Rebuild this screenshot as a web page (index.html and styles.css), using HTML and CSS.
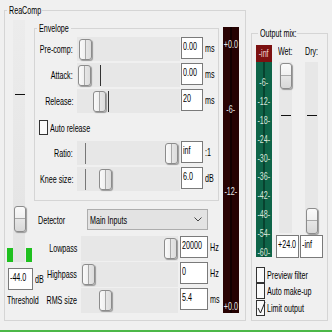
FILE: index.html
```html
<!DOCTYPE html>
<html lang="en">
<head>
    <meta charset="UTF-8">
    <title>ReaComp</title>
    <link rel="stylesheet" href="styles.css">
</head>
<body>
<div class="app">
    <div class="panels">
        <fieldset class="group reacomp">
            <legend><span class="sx">ReaComp</span></legend>
            <div class="reacomp-body">
                <!-- threshold fader -->
                <div class="threshold">
                    <div class="thr-slider">
                        <span class="led"></span>
                        <div class="vtrack thr-track">
                            <span class="vtick" style="top:74px"></span>
                            <span class="vthumb" style="top:186px"></span>
                        </div>
                        <span class="led"></span>
                    </div>
                    <div class="thr-value"><span class="field"><span class="sx">-44.0</span></span><span class="unit sx">dB</span></div>
                    <div class="thr-label"><span class="sx">Threshold</span></div>
                </div>

                <div class="controls">
                    <fieldset class="group envelope">
                        <legend><span class="sx">Envelope</span></legend>
                        <div class="row">
                            <label><span class="sx">Pre-comp:</span></label>
                            <div class="htrack"><span class="hthumb" style="left:2px"></span></div>
                            <span class="field"><span class="sx">0.00</span></span><span class="unit sx">ms</span>
                        </div>
                        <div class="row">
                            <label><span class="sx">Attack:</span></label>
                            <div class="htrack"><span class="htick" style="left:23px"></span><span class="hthumb" style="left:1px"></span></div>
                            <span class="field"><span class="sx">0.00</span></span><span class="unit sx">ms</span>
                        </div>
                        <div class="row">
                            <label><span class="sx">Release:</span></label>
                            <div class="htrack"><span class="htick" style="left:31px"></span><span class="hthumb" style="left:16px"></span></div>
                            <span class="field"><span class="sx">20</span></span><span class="unit sx">ms</span>
                        </div>
                        <div class="check-row">
                            <span class="box"></span><span class="sx">Auto release</span>
                        </div>
                        <div class="row">
                            <label><span class="sx">Ratio:</span></label>
                            <div class="htrack"><span class="htick light" style="left:8px"></span><span class="hthumb" style="left:88px"></span></div>
                            <span class="field"><span class="sx">inf</span></span><span class="unit sx">:1</span>
                        </div>
                        <div class="row">
                            <label><span class="sx">Knee size:</span></label>
                            <div class="htrack"><span class="htick light" style="left:8px"></span><span class="hthumb" style="left:22px"></span></div>
                            <span class="field"><span class="sx">6.0</span></span><span class="unit sx">dB</span>
                        </div>
                    </fieldset>

                    <div class="detector">
                        <label><span class="sx">Detector</span></label>
                        <div class="select">
                            <span class="sx">Main Inputs</span>
                            <svg width="8" height="5" viewBox="0 0 8 5"><polyline points="0.5,0.5 4,4 7.5,0.5" fill="none" stroke="#444" stroke-width="1"/></svg>
                        </div>
                    </div>

                    <div class="filters">
                        <div class="row">
                            <label><span class="sx">Lowpass</span></label>
                            <div class="htrack"><span class="hthumb" style="left:83px"></span></div>
                            <span class="field"><span class="sx">20000</span></span><span class="unit sx">Hz</span>
                        </div>
                        <div class="row">
                            <label><span class="sx">Highpass</span></label>
                            <div class="htrack"><span class="hthumb" style="left:1px"></span></div>
                            <span class="field"><span class="sx">0</span></span><span class="unit sx">Hz</span>
                        </div>
                        <div class="row">
                            <label><span class="sx">RMS size</span></label>
                            <div class="htrack"><span class="hthumb" style="left:18px"></span></div>
                            <span class="field"><span class="sx">5.4</span></span><span class="unit sx">ms</span>
                        </div>
                    </div>
                </div>

                <!-- gain reduction meter -->
                <div class="gr-meter">
                    <span class="mark" style="top:12px"><span class="sx">+0.0</span></span>
                    <span class="mark" style="top:77px"><span class="sx">-6-</span></span>
                    <span class="mark" style="top:159px"><span class="sx">-12-</span></span>
                    <span class="mark" style="top:274px"><span class="sx">+0.0</span></span>
                </div>
            </div>
        </fieldset>

        <fieldset class="group output">
            <legend><span class="sx">Output mix:</span></legend>
            <div class="mix">
                <div class="out-meter">
                    <div class="clip"><span class="sx">-inf</span></div>
                    <div class="scale">
                        <span class="sx">-6-</span><span class="sx">-12-</span><span class="sx">-18-</span><span class="sx">-24-</span><span class="sx">-30-</span>
                        <span class="sx">-36-</span><span class="sx">-42-</span><span class="sx">-48-</span><span class="sx">-54-</span><span class="sx">-60-</span>
                    </div>
                </div>
                <div class="fader wet">
                    <div class="fader-label"><span class="sx">Wet:</span></div>
                    <div class="vtrack mix-track">
                        <span class="vtick" style="top:53px"></span>
                        <span class="vthumb" style="top:1px"></span>
                    </div>
                    <span class="field"><span class="sx">+24.0</span></span>
                </div>
                <div class="fader dry">
                    <div class="fader-label"><span class="sx">Dry:</span></div>
                    <div class="vtrack mix-track">
                        <span class="vtick" style="top:53px"></span>
                        <span class="vthumb" style="top:146px"></span>
                    </div>
                    <span class="field"><span class="sx">-inf</span></span>
                </div>
            </div>
            <div class="options">
                <div class="check-row"><span class="box"></span><span class="sx">Preview filter</span></div>
                <div class="check-row"><span class="box"></span><span class="sx">Auto make-up</span></div>
                <div class="check-row limit">
                    <span class="box"><svg width="9" height="14" viewBox="0 0 9 14"><polyline points="1,7 3.5,12 8,1" fill="none" stroke="#222" stroke-width="1"/></svg></span>
                    <span class="sx">Limit output</span>
                </div>
            </div>
        </fieldset>
    </div>
    <div class="status"></div>
</div>
</body>
</html>
```

FILE: styles.css
```css
*{
    margin:0;
    padding:0;
    box-sizing: border-box;
}
html,body{
    width: 332px;
    height: 332px;
    overflow: hidden;
}
body{
    background: #f0f0f0;
    color: #000;
    font: 11px "Liberation Sans", Arial, sans-serif;
}
/* the dialog font is a narrow one, squeeze the text */
.sx{
    display: inline-block;
    flex: none;
    white-space: nowrap;
    transform: scaleX(.65);
    transform-origin: left center;
}
.app{
    height: 332px;
    display: flex;
    flex-direction: column;
}
.panels{
    flex: 1;
    display: flex;
    align-items: flex-start;
    padding: 4px 0 0 4px;
}
.status{
    height: 2px;
    background: #4cb848;
}

/* group boxes */
.group{
    border: 1px solid #d5d5d5;
    min-width: 0;
}
.group legend{
    margin-left: 2px;
    padding: 0 2px;
    line-height: 13px;
    white-space: nowrap;
}
.reacomp legend{
    width: 35px;
}
.envelope legend{
    width: 34px;
}
.output legend{
    width: 39px;
}
.reacomp{
    width: 242px;
    height: 317px;
}
.reacomp-body{
    display: flex;
    align-items: flex-start;
}

/* shared bits */
.field{
    display: block;
    flex: none;
    width: 22px;
    height: 22px;
    padding: 1px 0 0 1px;
    line-height: 14px;
    background: #fff;
    border: 1px solid #7a7a7a;
    white-space: nowrap;
    overflow: hidden;
}
.unit{
    margin-left: 2px;
    line-height: 22px;
}
.htrack, .vtrack{
    position: relative;
    flex: none;
    background: #e7e7e7;
}
.hthumb{
    position: absolute;
    top: 2px;
    width: 13px;
    height: 21px;
    border: 1px solid #8c8c8c;
    border-radius: 3px;
    background: linear-gradient(to right, #fafafa 0, #f0f0f0 45%, #a9a9a9 45%, #a9a9a9 55%, #e6e6e6 55%, #dcdcdc 100%);
    box-shadow: 1px 1px 1px #9a9a9a;
}
.vthumb{
    position: absolute;
    left: 1px;
    width: 12px;
    height: 26px;
    border: 1px solid #8c8c8c;
    border-radius: 3px;
    background: linear-gradient(to bottom, #fafafa 0, #f0f0f0 45%, #a9a9a9 45%, #a9a9a9 52%, #e6e6e6 52%, #d8d8d8 100%);
    box-shadow: 1px 1px 1px #9a9a9a;
}
.htick{
    position: absolute;
    top: 2px;
    width: 1px;
    height: 21px;
    background: #333;
}
.htick.light{
    background: #777;
}
.vtick{
    position: absolute;
    left: 2px;
    width: 10px;
    height: 1px;
    background: #111;
}
.check-row{
    display: flex;
    align-items: center;
    gap: 2px;
    white-space: nowrap;
}
.box{
    display: block;
    flex: none;
    width: 9px;
    height: 16px;
    border: 1px solid #333;
    background: #fafafa;
}

/* threshold */
.threshold{
    width: 29px;
    flex: none;
    padding-left: 2px;
}
.thr-slider{
    display: flex;
    align-items: flex-end;
    margin-top: 3px;
    height: 242px;
}
.led{
    width: 6px;
    height: 14px;
    background: #1fc01f;
}
.thr-track{
    width: 12px;
    height: 100%;
    margin-right: 1px;
    background: linear-gradient(#ececec, #e3e3e3);
}
.thr-value{
    display: flex;
    margin-top: 6px;
    padding-left: 1px;
}
.thr-value .field{
    width: 25px;
}
.thr-label{
    margin-top: 4px;
    line-height: 13px;
    white-space: nowrap;
}

/* envelope + filters */
.controls{
    width: 185px;
    flex: none;
    margin-top: 5px;
}
.envelope{
    height: 179px;
    padding-top: 2px;
}
.row{
    display: flex;
    align-items: flex-start;
    height: 24px;
    margin-bottom: 2px;
    white-space: nowrap;
}
.row label{
    width: 38px;
    flex: none;
    display: flex;
    justify-content: flex-end;
    line-height: 24px;
}
.row label .sx{
    transform-origin: right center;
}
.row .htrack{
    width: 103px;
    height: 24px;
    margin-left: 4px;
}
.row .field{
    margin-left: 1px;
}
.envelope .check-row{
    margin: 7px 0 6px 4px;
}
.envelope .check-row .box{
    height: 15px;
}

.detector{
    display: flex;
    align-items: center;
    margin-top: 8px;
    padding-left: 4px;
}
.detector label{
    width: 49px;
    flex: none;
}
.select{
    width: 121px;
    height: 21px;
    display: flex;
    align-items: center;
    justify-content: space-between;
    padding: 0 5px 0 2px;
    background: #e3e3e3;
    border: 1px solid #adadad;
}

.filters{
    margin-top: 6px;
}
.filters .row{
    height: 25px;
    margin-bottom: 1px;
}
.filters .row label{
    width: 43px;
    line-height: 25px;
}
.filters .row .htrack{
    width: 97px;
    height: 25px;
}
.filters .row .field{
    width: 28px;
    margin-left: 2px;
}

/* gain reduction meter */
.gr-meter{
    position: relative;
    width: 16px;
    height: 286px;
    margin: 10px 0 0 4px;
    background: linear-gradient(to right, #2a0303 0, #2a0303 45%, #120000 45%, #120000 55%, #250202 55%);
}
.gr-meter .mark{
    position: absolute;
    left: 0;
    width: 100%;
    display: flex;
    justify-content: center;
    line-height: 11px;
    color: #e8e8e8;
}
.gr-meter .sx, .out-meter .sx{
    transform-origin: center;
}

/* output mix */
.output{
    width: 77px;
    height: 294px;
    margin: 23px 0 0 5px;
    padding-left: 4px;
}
.mix{
    display: flex;
    align-items: flex-start;
    margin-top: 5px;
}
.out-meter{
    width: 16px;
    height: 212px;
    flex: none;
    display: flex;
    flex-direction: column;
}
.clip{
    height: 17px;
    display: flex;
    justify-content: center;
    line-height: 16px;
    background: #7c1111;
    color: #f0d0d0;
}
.scale{
    flex: 1;
    display: flex;
    flex-direction: column;
    justify-content: space-between;
    align-items: center;
    padding-top: 15px;
    line-height: 10px;
    color: #d6e6dc;
    background: linear-gradient(to right, #0e6448 0, #0e6448 44%, #08422f 44%, #08422f 56%, #0e6448 56%);
}
.fader{
    width: 23px;
    flex: none;
    display: flex;
    flex-direction: column;
}
.wet{
    margin-left: 4px;
}
.dry{
    margin-left: 1px;
}
.fader-label{
    line-height: 13px;
    padding-left: 2px;
}
.dry .fader-label{
    padding-left: 5px;
}
.mix-track{
    width: 13px;
    height: 171px;
    margin: 4px 0 0 3px;
}
.dry .mix-track{
    margin-left: 5px;
}
.fader .field{
    width: 23px;
    height: 23px;
    margin-top: 2px;
}
.options{
    margin-top: 9px;
}
.options .check-row .box{
    height: 16px;
}
.options .limit{
    margin-top: 1px;
}
.limit .box svg{
    display: block;
}
```
